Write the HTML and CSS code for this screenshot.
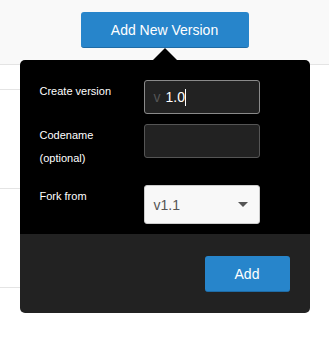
FILE: index.html
```html
<!DOCTYPE html>
<html lang="en">
<head>
    <meta charset="UTF-8">
    <meta name="viewport" content="width=device-width, initial-scale=1.0">
    <title>Add New Version</title>
    <link rel="stylesheet" href="styles.css">
</head>
<body>
    <div class="toolbar">
        <div class="toolbar-action">
            <button class="btn-primary btn-large">Add New Version</button>

            <div class="popover">
                <div class="popover-arrow"></div>
                <div class="popover-body">
                    <div class="form-row">
                        <label class="form-label">Create version</label>
                        <div class="field field-focus">
                            <span class="prefix">v</span>
                            <span class="value">1.0</span>
                            <span class="caret"></span>
                        </div>
                    </div>
                    <div class="form-row">
                        <label class="form-label">Codename<br>(optional)</label>
                        <div class="field"></div>
                    </div>
                    <div class="form-row">
                        <label class="form-label">Fork from</label>
                        <div class="select">
                            <span>v1.1</span>
                            <span class="select-caret"></span>
                        </div>
                    </div>
                </div>
                <div class="popover-footer">
                    <button class="btn-primary btn-add">Add</button>
                </div>
            </div>
        </div>
    </div>

    <ul class="version-list">
        <li></li>
        <li></li>
        <li></li>
    </ul>
</body>
</html>
```

FILE: styles.css
```css
/* General Styling */
html, body {
    height: 100%;
}

body {
    margin: 0;
    padding: 0;
    font-family: 'Liberation Sans', Arial, sans-serif;
    background: #ffffff;
    color: #333333;
}

.toolbar {
    height: 64px;
    background: #f9f9f9;
    border-bottom: 1px solid #e4e4e4;
    display: flex;
    justify-content: center;
}

.toolbar-action {
    position: relative;
    margin-top: 12px;
}

.btn-primary {
    background-color: #2785cb;
    border: none;
    border-bottom: 1px solid #1f6ca6;
    border-radius: 3px;
    color: #ffffff;
    font-family: inherit;
    font-size: 14px;
    cursor: pointer;
    padding: 0;
}

.btn-large {
    width: 168px;
    height: 36px;
}

/* Popover */
.popover {
    position: absolute;
    top: 36px;
    left: 50%;
    width: 290px;
    margin-left: -145px;
    z-index: 2;
}

.popover-arrow {
    width: 0;
    height: 0;
    margin: 0 auto;
    border-left: 12px solid transparent;
    border-right: 12px solid transparent;
    border-bottom: 12px solid #000000;
}

.popover-body {
    background: #000000;
    border-radius: 5px 5px 0 0;
    padding: 20px 50px 10px 20px;
}

.popover-footer {
    background: #222222;
    border-radius: 0 0 5px 5px;
    padding: 22px 20px 21px;
    display: flex;
    justify-content: flex-end;
}

.btn-add {
    width: 85px;
    height: 36px;
}

.form-row {
    display: grid;
    grid-template-columns: 104px 116px;
    margin-bottom: 10px;
}

.form-row:last-child {
    margin-bottom: 0;
}

.form-label {
    color: #ffffff;
    font-size: 11px;
    line-height: 23px;
    margin-bottom: 5px;
}

.field {
    height: 34px;
    box-sizing: border-box;
    background: #222222;
    border: 1px solid #555555;
    border-radius: 3px;
    display: flex;
    align-items: center;
    padding: 0 9px;
    font-size: 14px;
}

.field-focus {
    border-color: #8a8a8a;
}

.prefix {
    color: #555555;
    margin-right: 5px;
}

.value {
    color: #ffffff;
}

.caret {
    width: 1px;
    height: 17px;
    background: #ffffff;
}

.select {
    height: 39px;
    box-sizing: border-box;
    background: #f8f8f8;
    border: 1px solid #cccccc;
    border-radius: 3px;
    display: flex;
    align-items: center;
    justify-content: space-between;
    padding: 0 11px 0 9px;
    font-size: 14px;
    color: #555555;
}

.select-caret {
    width: 0;
    height: 0;
    border-left: 5px solid transparent;
    border-right: 5px solid transparent;
    border-top: 5px solid #555555;
}

/* Background list */
.version-list {
    list-style: none;
    margin: 0;
    padding: 0;
    width: 200px;
}

.version-list li {
    border-bottom: 1px solid #e4e4e4;
    height: 98px;
}

.version-list li:first-child {
    height: 24px;
}
```
